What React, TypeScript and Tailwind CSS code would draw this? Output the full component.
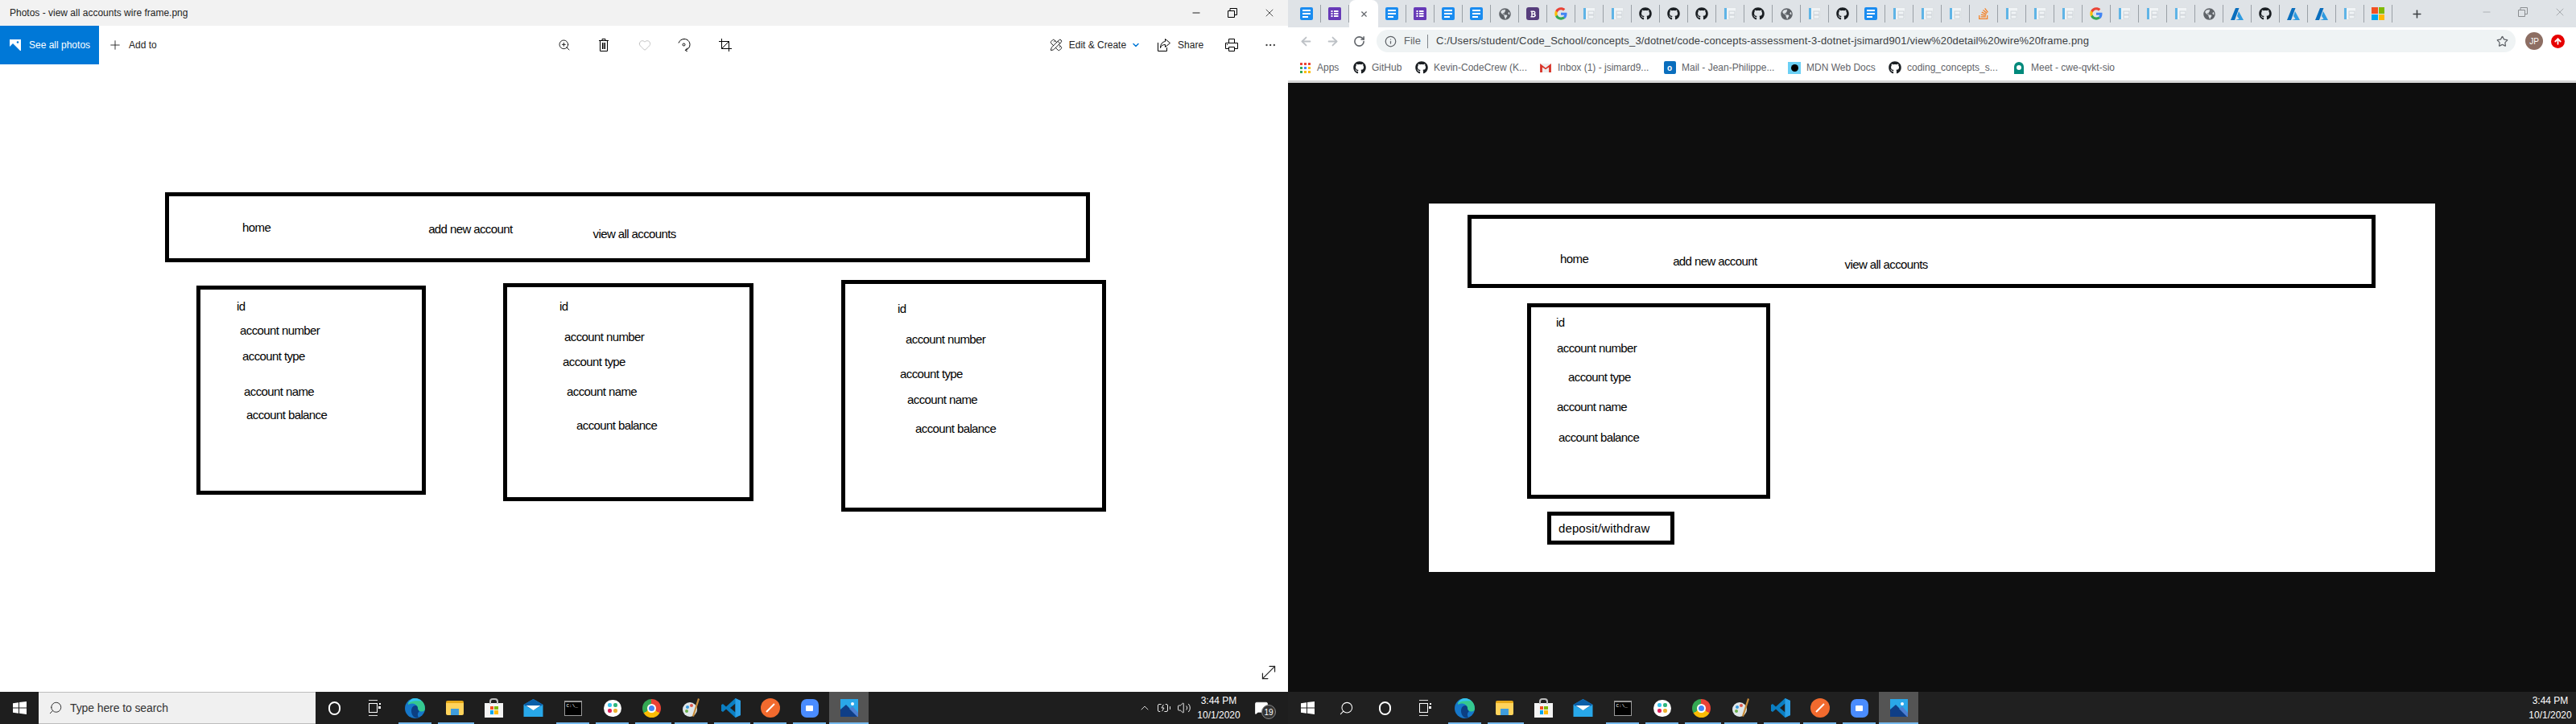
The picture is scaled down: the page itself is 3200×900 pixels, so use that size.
import React from 'react';
import { Plus, ZoomIn, Heart, PencilRuler, ChevronDown, MoreHorizontal, Minus, X, ArrowLeft, ArrowRight, RotateCw as Reload, Info, Star, Search, ChevronUp, BatteryCharging, Volume2, MessageSquare, ArrowUp, MoveDiagonal } from 'lucide-react';
import { FaGithub, FaBold, FaStackOverflow, FaGlobeAmericas } from 'react-icons/fa';

const FONT = "[font-family:'Liberation_Sans',Arial,sans-serif]";

function GoogleG({ size = 16 }: { size?: number }) {
  return (
    <svg width={size} height={size} viewBox="0 0 48 48">
      <path fill="#EA4335" d="M24 10c3.500 0 6.600 1.200 9.100 3.500l6.800-6.800C35.800 2.900 30.300 1 24 1 14.900 1 7.100 6.200 3.300 13.800l7.900 6.100C13.100 14 18.100 10 24 10z" />
      <path fill="#4285F4" d="M46.500 24.500c0-1.600-.1-3.100-.4-4.500H24v9h12.700c-.6 2.900-2.200 5.400-4.700 7l7.600 5.900c4.400-4.100 6.900-10.100 6.900-17.400z" />
      <path fill="#FBBC05" d="M11.200 28.900C10.700 27.400 10.500 25.700 10.500 24s.2-3.400.7-4.900l-7.900-6.100C1.800 16.300 1 20 1 24s.8 7.700 2.300 11l7.900-6.100z" />
      <path fill="#34A853" d="M24 47c6.300 0 11.500-2.100 15.600-5.600L32 35.500c-2.100 1.400-4.800 2.300-8 2.300-5.900 0-10.900-4-12.700-9.300l-7.900 6.100C7.100 41.800 14.900 47 24 47z" />
    </svg>
  );
}

function DocIcon() {
  return (
    <div className="flex h-[16px] w-[16px] flex-col justify-center gap-[2px] rounded-[2px] bg-[#1a8cf0] px-[3px]">
      <div className="h-[2px] w-full bg-white" />
      <div className="h-[2px] w-full bg-white" />
      <div className="h-[2px] w-2/3 bg-white" />
    </div>
  );
}

function FormIcon() {
  return (
    <svg width="16" height="16" viewBox="0 0 16 16">
      <rect width="16" height="16" rx="1.500" fill="#673ab7" />
      <path d="M3.500 4h2v2h-2zM7 4h5.500v2H7zM3.500 7h2v2h-2zM7 7h5.500v2H7zM3.500 10h2v2h-2zM7 10h5.500v2H7z" fill="#fff" />
    </svg>
  );
}

function FileIcon() {
  return (
    <svg width="16" height="16" viewBox="0 0 16 16">
      <rect x="0.500" y="0.500" width="15" height="15" fill="#f1f4f6" stroke="#dde1e4" />
      <rect x="1" y="1" width="3" height="14" fill="#5fb4e6" />
      <rect x="7" y="5" width="7" height="4" fill="none" stroke="#cbd1d6" />
      <rect x="7" y="10" width="7" height="4" fill="none" stroke="#cbd1d6" />
    </svg>
  );
}

function AzureIcon() {
  return (
    <svg width="16" height="15" viewBox="0 0 16 15">
      <path d="M6 0h4.500L5 15H0z" fill="#0a6ebd" />
      <path d="M10 4l6 11H6l4.500-1.500L8 10z" fill="#2f9be0" />
    </svg>
  );
}

function MsLogo() {
  return (
    <div className="grid h-[16px] w-[16px] grid-cols-2 grid-rows-2 gap-[1px]">
      <div className="bg-[#f25022]" />
      <div className="bg-[#7fba00]" />
      <div className="bg-[#00a4ef]" />
      <div className="bg-[#ffb900]" />
    </div>
  );
}

type TabKind = 'doc' | 'form' | 'active' | 'globe' | 'bs' | 'g' | 'file' | 'gh' | 'so' | 'az' | 'ms';

const tabs: TabKind[] = [
  'doc', 'form', 'active', 'doc', 'form', 'doc', 'doc', 'globe', 'bs', 'g', 'file', 'file', 'gh', 'gh', 'gh', 'file', 'gh', 'globe', 'file', 'gh', 'doc', 'file',
  'file', 'file', 'so', 'file', 'file', 'file', 'g', 'file', 'file', 'file', 'globe', 'az', 'gh', 'az', 'az', 'file', 'ms',
];

function TabGlyph({ kind }: { kind: TabKind }) {
  if (kind === 'doc') return <DocIcon />;
  if (kind === 'form') return <FormIcon />;
  if (kind === 'globe') return <FaGlobeAmericas className="text-[15px] text-[#5f6368]" />;
  if (kind === 'bs') return <div className="flex h-[16px] w-[16px] items-center justify-center rounded-[3px] bg-[#563d7c]"><FaBold className="text-[9px] text-white" /></div>;
  if (kind === 'g') return <GoogleG />;
  if (kind === 'file') return <FileIcon />;
  if (kind === 'gh') return <FaGithub className="text-[16px] text-[#1b1f23]" />;
  if (kind === 'so') return <FaStackOverflow className="text-[16px] text-[#f48024]" />;
  if (kind === 'az') return <AzureIcon />;
  if (kind === 'ms') return <MsLogo />;
  return null;
}

function RestoreIcon({ className }: { className?: string }) {
  return (
    <svg width="12" height="12" viewBox="0 0 12 12" fill="none" stroke="currentColor" className={className}>
      <path d="M.500 3.500h8v8h-8z" />
      <path d="M3 3.500V.500h8.500v8H8.500" />
    </svg>
  );
}

function TabStrip() {
  return (
    <div className="flex h-[34px] items-center bg-[#dfe3e7] pl-[6px]">
      {tabs.map((kind, i) =>
        kind === 'active' ? (
          <div key={i} className="flex h-[34px] w-[36px] items-center justify-center rounded-t-[8px] bg-white">
            <X size={11} className="text-[#5f6368]" strokeWidth={2.5} />
          </div>
        ) : (
          <div key={i} className="flex h-[34px] w-[35px] items-center">
            <div className="flex flex-1 justify-center">
              <TabGlyph kind={kind} />
            </div>
            <div className="h-[22px] w-px bg-[#9aa0a6]" />
          </div>
        )
      )}
      <div className="ml-[23px] flex items-center">
        <Plus size={15} strokeWidth={2.5} className="text-[#3c4043]" />
      </div>
      <div className="ml-[72px] flex -translate-y-[2px] items-center gap-[32px] text-[#8a8d90]">
        <Minus size={14} strokeWidth={1} />
        <RestoreIcon />
        <X size={16} strokeWidth={1} />
      </div>
    </div>
  );
}

function AddressRow() {
  return (
    <div className="flex h-[34px] items-center bg-white pl-[14px]">
      <ArrowLeft size={17} strokeWidth={2.5} className="text-[#bdc1c6]" />
      <ArrowRight size={17} strokeWidth={2.5} className="ml-[16px] text-[#bdc1c6]" />
      <Reload size={15} strokeWidth={2.5} className="ml-[17px] text-[#5f6368]" />
      <div className="ml-[14px] flex h-[28px] w-[1415px] items-center rounded-full bg-[#eff3f4] pl-[10px] text-[#3c4043]">
        <Info size={15} className="text-[#5f6368]" />
        <span className="ml-[9px] text-[13px] text-[#5f6368]">File</span>
        <div className="ml-[8px] h-[17px] w-px bg-[#80868b]" />
        <span className="ml-[10px] text-[13px] whitespace-nowrap tracking-[0.16px]">C:/Users/student/Code_School/concepts_3/dotnet/code-concepts-assessment-3-dotnet-jsimard901/view%20detail%20wire%20frame.png</span>
        <Star size={15} className="ml-auto mr-[9px] text-[#5f6368]" />
      </div>
      <div className="ml-[12px] flex h-[22px] w-[22px] items-center justify-center rounded-full bg-[#8d6e63] text-[10px] text-white">JP</div>
      <div className="ml-[10px] flex h-[17px] w-[17px] items-center justify-center rounded-full bg-[#e60000]">
        <ArrowUp size={11} strokeWidth={4} className="text-white" />
      </div>
    </div>
  );
}

function AppsGrid() {
  const colors = ['bg-[#ea4335]', 'bg-[#ea4335]', 'bg-[#ea4335]', 'bg-[#34a853]', 'bg-[#4285f4]', 'bg-[#fbbc05]', 'bg-[#34a853]', 'bg-[#fbbc05]', 'bg-[#fbbc05]'];
  return (
    <div className="grid h-[13px] w-[13px] grid-cols-3 gap-[2px]">
      {colors.map((c, i) => <div key={i} className={c} />)}
    </div>
  );
}

function Bookmark({ icon, label, w }: { icon: React.ReactNode; label: string; w: string }) {
  return (
    <div className={`flex items-center ${w}`}>
      <div className="flex w-[16px] shrink-0 justify-center">{icon}</div>
      <span className="ml-[7px] text-[12px] whitespace-nowrap text-[#5f6368]">{label}</span>
    </div>
  );
}

function BookmarksRow() {
  const gh = <FaGithub className="text-[16px] text-[#1b1f23]" />;
  return (
    <div className="box-content flex h-[32px] items-center border-b-[3px] border-[#d8d8d8] bg-white pl-[13px]">
      <Bookmark icon={<AppsGrid />} label="Apps" w="w-[68px]" />
      <Bookmark icon={gh} label="GitHub" w="w-[77px]" />
      <Bookmark icon={gh} label="Kevin-CodeCrew (K..." w="w-[154px]" />
      <Bookmark icon={<svg width="14" height="11" viewBox="0 0 15 12"><path d="M0 0h15v12H0z" fill="#eee" /><path d="M0 0l7.500 6L15 0v12h-3V5L7.500 8 3 5v7H0z" fill="#d93025" /></svg>} label="Inbox (1) - jsimard9..." w="w-[154px]" />
      <Bookmark icon={<div className="flex h-[16px] w-[15px] items-center justify-center rounded-[2px] bg-[#0a6ebd] text-[10px] font-bold text-white">o</div>} label="Mail - Jean-Philippe..." w="w-[155px]" />
      <Bookmark icon={<div className="h-[15px] w-[16px] bg-[#6bd0f5] pt-[3px]"><div className="mx-auto h-[9px] w-[9px] rounded-full bg-black" /></div>} label="MDN Web Docs" w="w-[125px]" />
      <Bookmark icon={gh} label="coding_concepts_s..." w="w-[154px]" />
      <Bookmark icon={<div className="flex h-[15px] w-[12px] items-center justify-center rounded-t-full rounded-b-[6px] bg-[#00897b]"><div className="h-[6px] w-[6px] rounded-full bg-white" /></div>} label="Meet - cwe-qvkt-sio" w="w-[140px]" />
    </div>
  );
}

function Card({ className, children }: { className: string; children: React.ReactNode }) {
  return <div className={`shrink-0 border-[5px] border-black ${className}`}>{children}</div>;
}

function Label({ className, text, tracking = 'tracking-[-0.6px]' }: { className: string; text: string; tracking?: string }) {
  return <div className={`h-[18px] text-[15px] leading-[18px] whitespace-nowrap text-black ${tracking} ${className}`}>{text}</div>;
}

function SeeAllIcon() {
  return (
    <svg width="14" height="14" viewBox="0 0 14 14">
      <rect width="14" height="14" fill="#fff" />
      <circle cx="10" cy="3.500" r="1.300" fill="#0078d7" />
      <path d="M0 9l4-4 9 9H0z" fill="#0078d7" />
    </svg>
  );
}

function TrashIcon({ className }: { className?: string }) {
  return (
    <svg width="16" height="16" viewBox="0 0 16 16" fill="none" stroke="currentColor" className={className}>
      <path d="M2 2.500h12M6 2.500V.500h4v2M3.500 2.500v13h9v-13M6.500 5v8M8 5v8M9.500 5v8" />
    </svg>
  );
}

function RotateIcon({ className }: { className?: string }) {
  return (
    <svg width="16" height="16" viewBox="0 0 16 16" fill="none" stroke="currentColor" className={className}>
      <path d="M1 5.500C2 2.500 4.800.500 8 .500c4 0 7 3.200 7 7 0 3.300-2.200 6-5.500 6.800" />
      <path d="M12 11.500l-2.700 3 2.700 1.500" />
      <circle cx="7.500" cy="7.500" r="1.500" />
    </svg>
  );
}

function CropIcon({ className }: { className?: string }) {
  return (
    <svg width="16" height="16" viewBox="0 0 16 16" fill="none" stroke="currentColor" className={className}>
      <path d="M0 3.500h12.500V16M3.500 0v12.500H16M3.500 12.500l9-9" />
    </svg>
  );
}

function ShareIcon({ className }: { className?: string }) {
  return (
    <svg width="16" height="16" viewBox="0 0 16 16" fill="none" stroke="currentColor" className={className}>
      <path d="M.500 5v10.500h11V11" />
      <path d="M9.500.500l6 5-6 5V7.500c-3 0-5 1-6 4C3.500 7 6 4 9.500 3.500z" />
    </svg>
  );
}

function PrintIcon({ className }: { className?: string }) {
  return (
    <svg width="16" height="16" viewBox="0 0 16 16" fill="none" stroke="currentColor" className={className}>
      <path d="M4.500 5.500v-5h7v5M4.500 12.500H.500v-7h15v7h-4" />
      <path d="M4.500 10.500h7v5h-7zM2 7.500h1" />
    </svg>
  );
}

function LeftWindow() {
  return (
    <div className="flex h-full w-[1600px] shrink-0 flex-col bg-white">
      <div className="flex h-[32px] items-center bg-[#f2f2f2] pl-[12px] text-[12px] text-[#222]">
        <span>Photos - view all accounts wire frame.png</span>
        <div className="ml-auto flex items-center gap-[32px] pr-[15px] text-black">
          <Minus size={14} strokeWidth={1.5} />
          <RestoreIcon />
          <X size={16} strokeWidth={1} />
        </div>
      </div>
      <div className="flex h-[48px] items-center text-[12px] text-[#222]">
        <div className="flex h-full w-[123px] items-center bg-[#0078d7] pl-[12px] text-white">
          <SeeAllIcon />
          <span className="ml-[10px]">See all photos</span>
        </div>
        <Plus size={18} strokeWidth={1.2} className="ml-[11px]" />
        <span className="ml-[8px]">Add to</span>
        <ZoomIn size={16} strokeWidth={1.3} className="ml-[498px] text-black" />
        <TrashIcon className="ml-[33px] text-black" />
        <Heart size={16} strokeWidth={1.2} className="ml-[35px] text-[#b5b5b5]" />
        <RotateIcon className="ml-[33px] text-black" />
        <CropIcon className="ml-[35px] text-black" />
        <PencilRuler size={16} strokeWidth={1.3} className="ml-[395px] text-black" />
        <span className="ml-[8px]">Edit &amp; Create</span>
        <ChevronDown size={12} strokeWidth={3} className="ml-[6px] text-[#0078d7]" />
        <ShareIcon className="ml-[21px] text-black" />
        <span className="ml-[9px]">Share</span>
        <PrintIcon className="ml-[27px] text-black" />
        <MoreHorizontal size={16} strokeWidth={1.2} className="ml-[32px] text-black" />
      </div>

      <div className="flex-1 pl-[205px] pt-[159px]">
        <Card className="flex h-[87px] w-[1149px] items-start">
          <Label className="ml-[91px] mt-[30px]" text="home" />
          <Label className="ml-[196px] mt-[32px]" text="add new account" />
          <Label className="ml-[100px] mt-[38px]" text="view all accounts" />
        </Card>
        <div className="flex items-start">
          <Card className="ml-[39px] mt-[29px] h-[260px] w-[285px]">
            <Label className="ml-[45px] mt-[12px]" text="id" />
            <Label className="ml-[49px] mt-[12px]" text="account number" />
            <Label className="ml-[52px] mt-[14px]" text="account type" />
            <Label className="ml-[54px] mt-[26px]" text="account name" />
            <Label className="ml-[57px] mt-[11px]" text="account balance" />
          </Card>
          <Card className="ml-[96px] mt-[26px] h-[271px] w-[311px]">
            <Label className="ml-[65px] mt-[15px]" text="id" />
            <Label className="ml-[71px] mt-[20px]" text="account number" />
            <Label className="ml-[69px] mt-[13px]" text="account type" />
            <Label className="ml-[74px] mt-[19px]" text="account name" />
            <Label className="ml-[86px] mt-[24px]" text="account balance" />
          </Card>
          <Card className="ml-[109px] mt-[22px] h-[288px] w-[329px]">
            <Label className="ml-[65px] mt-[22px]" text="id" />
            <Label className="ml-[75px] mt-[20px]" text="account number" />
            <Label className="ml-[68px] mt-[25px]" text="account type" />
            <Label className="ml-[77px] mt-[14px]" text="account name" />
            <Label className="ml-[87px] mt-[18px]" text="account balance" />
          </Card>
        </div>
        <div className="flex justify-end pr-[11px] pt-[187px]">
          <MoveDiagonal size={26} strokeWidth={1.1} className="text-[#222]" />
        </div>
      </div>
    </div>
  );
}

function RightWindow() {
  return (
    <div className="flex h-full w-[1600px] shrink-0 flex-col bg-[#0e0e0e]">
      <TabStrip />
      <AddressRow />
      <BookmarksRow />
      <div className="pl-[175px] pt-[150px]">
        <div className="h-[458px] w-[1250px] bg-white pl-[48px] pt-[14px]">
          <Card className="flex h-[91px] w-[1128px] items-start">
            <Label className="ml-[110px] mt-[41px]" text="home" />
            <Label className="ml-[105px] mt-[44px]" text="add new account" />
            <Label className="ml-[109px] mt-[48px]" text="view all accounts" />
          </Card>
          <Card className="ml-[74px] mt-[19px] h-[243px] w-[302px]">
            <Label className="ml-[31px] mt-[10px]" text="id" />
            <Label className="ml-[32px] mt-[14px]" text="account number" />
            <Label className="ml-[46px] mt-[18px]" text="account type" />
            <Label className="ml-[32px] mt-[19px]" text="account name" />
            <Label className="ml-[34px] mt-[20px]" text="account balance" />
          </Card>
          <Card className="ml-[99px] mt-[16px] flex h-[41px] w-[158px] items-center">
            <Label className="ml-[9px]" text="deposit/withdraw" tracking="tracking-[0.1px]" />
          </Card>
        </div>
      </div>
    </div>
  );
}

function StartIcon({ className }: { className?: string }) {
  return (
    <svg width="17" height="16" viewBox="0 0 17 16" className={className}>
      <path d="M0 2.300l7-1v6.300H0zM8 1.100L17 0v7.600H8zM0 8.500h7v6.300l-7-1zM8 8.500h9V16l-9-1.200z" fill="#fff" />
    </svg>
  );
}

function EdgeIcon() {
  return (
    <svg width="25" height="25" viewBox="0 0 25 25">
      <circle cx="12.500" cy="12.500" r="12.500" fill="#1677c9" />
      <path d="M4 6C6 2 9.500 0 12.500 0 19 0 25 5 25 13c0 2-1.500 3.500-4 3.500-3 0-5-1-5-3 0-4-3-7-6.500-7C7.500 6.500 5.500 7 4 8z" fill="#35c98f" />
      <path d="M4 6C6 2 9.500 0 12.500 0c3 0 6 1.200 8 3.500C15 3 9 3 4 6z" fill="#35c1f1" />
      <path d="M8 16c0-4 2-7 5-7 2 0 3 1.500 3 3.500 0 1.200.5 2.500 2 3.500-2 2-3 5-1 8-5 2-9-3-9-8z" fill="#0c3f82" />
    </svg>
  );
}

function FolderIcon() {
  return (
    <div className="h-[18px] w-[22px] rounded-[2px] border-t-[3px] border-[#e6a817] bg-[#ffd35c]">
      <div className="mx-auto mt-[7px] h-[8px] w-[10px] bg-[#3f9ddd]" />
    </div>
  );
}

function StoreIcon() {
  return (
    <div className="relative mt-[5px] h-[18px] w-[23px] bg-[#f4f4f4] pt-[4px]">
      <div className="absolute -top-[6px] left-[6px] h-[7px] w-[11px] rounded-t-[4px] border-2 border-b-0 border-[#bbb]" />
      <div className="mx-auto grid h-[10px] w-[10px] grid-cols-2 gap-[1px]">
        <div className="bg-[#f25022]" />
        <div className="bg-[#7fba00]" />
        <div className="bg-[#00a4ef]" />
        <div className="bg-[#ffb900]" />
      </div>
    </div>
  );
}

function MailIcon() {
  return (
    <svg width="25" height="22" viewBox="0 0 24 22">
      <path d="M0 7L12 0l12 7v15H0z" fill="#28a8ea" />
      <path d="M0 7L12 0l12 7-12 7z" fill="#0a5ea8" />
      <path d="M3 8h18l-9 6z" fill="#fff" />
    </svg>
  );
}

function CmdIcon() {
  return (
    <div className="h-[19px] w-[22px] border border-[#999] border-t-[2px] bg-black pl-[2px] pt-[2px] font-mono text-[6px] leading-[6px] text-white">C:\_</div>
  );
}

function SlackIcon() {
  return (
    <div className="flex h-[21px] w-[22px] items-center justify-center rounded-full bg-white">
      <div className="grid h-[12px] w-[12px] grid-cols-2 gap-[2px]">
        <div className="rounded-[2px] bg-[#36c5f0]" />
        <div className="rounded-[2px] bg-[#2eb67d]" />
        <div className="rounded-[2px] bg-[#e01e5a]" />
        <div className="rounded-[2px] bg-[#ecb22e]" />
      </div>
    </div>
  );
}

function ChromeIcon() {
  return (
    <div className="flex h-[23px] w-[23px] items-center justify-center rounded-full bg-[conic-gradient(#ea4335_0deg_120deg,#fbbc05_120deg_240deg,#34a853_240deg_360deg)]">
      <div className="h-[11px] w-[11px] rounded-full border-2 border-white bg-[#4285f4]" />
    </div>
  );
}

function PaintIcon() {
  return (
    <svg width="22" height="24" viewBox="0 0 22 24">
      <ellipse cx="9" cy="14" rx="9" ry="9" fill="#dfe7ea" />
      <circle cx="6" cy="11" r="2" fill="#3b9be0" />
      <circle cx="11" cy="9" r="2" fill="#e0584d" />
      <circle cx="5" cy="16" r="2" fill="#6ab04c" />
      <path d="M19 0l2 1-7 22-2-1z" fill="#c98d3b" />
    </svg>
  );
}

function VsCodeIcon() {
  return (
    <svg width="24" height="24" viewBox="0 0 24 24">
      <path d="M17.500 0L24 3v18l-6.500 3L6 13.500 2 17l-2-1.200V8.200L2 7l4 3.500z" fill="#0a7ec2" />
      <path d="M17.500 6.500L11 12l6.500 5.500z" fill="#1e1e1e" />
      <path d="M17.500 0L24 3v18l-6.500 3z" fill="#2a9fe6" />
    </svg>
  );
}

function PencilApp() {
  return (
    <div className="flex h-[24px] w-[24px] items-center justify-center rounded-full bg-[#f26a2e]">
      <div className="h-[14px] w-[2px] rotate-45 bg-white" />
    </div>
  );
}

function ZoomApp() {
  return (
    <div className="flex h-[23px] w-[22px] items-center justify-center rounded-[7px] bg-[#4a8cff]">
      <div className="h-[7px] w-[9px] rounded-[1px] bg-white" />
    </div>
  );
}

function PhotosApp() {
  return (
    <svg width="22" height="22" viewBox="0 0 22 22">
      <rect width="22" height="22" fill="#2aa7e8" />
      <circle cx="15" cy="6" r="2" fill="#fff" />
      <path d="M0 22V13l7-6 15 15z" fill="#0f3e86" />
      <path d="M11 12l4-3 7 8v5h-1z" fill="#4d7fd1" />
    </svg>
  );
}

function TaskView() {
  return (
    <div className="relative h-[20px] w-[11px] border-y border-[#ddd] py-[3px]">
      <div className="h-full w-full border border-white" />
      <div className="absolute -right-[4px] top-[3px] h-[2px] w-[2px] bg-white" />
      <div className="absolute -right-[4px] top-[7px] h-[3px] w-[3px] bg-white" />
    </div>
  );
}

function TaskIcon({ children, running, active, extra }: { children: React.ReactNode; running?: boolean; active?: boolean; extra?: boolean }) {
  return (
    <div className={`relative flex h-[40px] w-[49px] shrink-0 items-center justify-center ${active ? 'bg-[#545454]' : ''}`}>
      {children}
      {running && <div className={`absolute bottom-0 h-[2px] bg-[#76b9ed] ${active ? 'inset-x-0' : extra ? 'left-[4px] right-0' : 'inset-x-[4px]'}`} />}
    </div>
  );
}

function AppIcons() {
  return (
    <>
      <TaskIcon running><EdgeIcon /></TaskIcon>
      <TaskIcon running extra><FolderIcon /></TaskIcon>
      <TaskIcon><StoreIcon /></TaskIcon>
      <TaskIcon><MailIcon /></TaskIcon>
      <TaskIcon running><CmdIcon /></TaskIcon>
      <TaskIcon running><SlackIcon /></TaskIcon>
      <TaskIcon running extra><ChromeIcon /></TaskIcon>
      <TaskIcon running><PaintIcon /></TaskIcon>
      <TaskIcon running extra><VsCodeIcon /></TaskIcon>
      <TaskIcon running><PencilApp /></TaskIcon>
      <TaskIcon running><ZoomApp /></TaskIcon>
      <TaskIcon running active><PhotosApp /></TaskIcon>
    </>
  );
}

function Clock({ className }: { className?: string }) {
  return (
    <div className={`flex flex-col items-center gap-[2px] text-[12px] leading-[16px] text-white ${className}`}>
      <span>3:44 PM</span>
      <span>10/1/2020</span>
    </div>
  );
}

function TaskbarLeft() {
  return (
    <div className="flex h-full w-[1600px] shrink-0 items-center bg-[#1e1e1e]">
      <div className="flex w-[48px] justify-center"><StartIcon /></div>
      <div className="flex h-full w-[344px] items-center border-y border-[#bdbdbd] bg-[#f0f0f0] pl-[12px] text-[14px] text-[#333]">
        <Search size={18} strokeWidth={1.3} className="-scale-x-100" />
        <span className="ml-[9px] tracking-[-0.1px]">Type here to search</span>
      </div>
      <div className="ml-[16px] h-[17px] w-[15px] rounded-full border-2 border-white" />
      <div className="ml-[35px]"><TaskView /></div>
      <div className="ml-[22px] flex"><AppIcons /></div>
      <div className="ml-[335px] flex items-center text-white">
        <ChevronUp size={16} strokeWidth={1.2} />
        <BatteryCharging size={18} strokeWidth={1.2} className="ml-[7px]" />
        <Volume2 size={18} strokeWidth={1.2} className="ml-[7px]" />
        <Clock className="ml-[4px] w-[60px]" />
        <div className="relative ml-[14px]">
          <MessageSquare size={18} fill="#fff" strokeWidth={1} />
          <span className="absolute -bottom-[5px] -right-[9px] flex h-[18px] w-[18px] items-center justify-center rounded-full border border-[#888] bg-[#333] text-[10px] text-white">19</span>
        </div>
      </div>
    </div>
  );
}

function TaskbarRight() {
  return (
    <div className="flex h-full w-[1600px] shrink-0 items-center bg-[#202020]">
      <div className="flex w-[48px] justify-center"><StartIcon /></div>
      <div className="flex w-[48px] justify-center"><Search size={19} strokeWidth={1.3} className="-scale-x-100 text-white" /></div>
      <div className="flex w-[48px] justify-center"><div className="h-[17px] w-[15px] rounded-full border-2 border-white" /></div>
      <div className="flex w-[48px] justify-center"><TaskView /></div>
      <div className="ml-[3px] flex"><AppIcons /></div>
      <Clock className="ml-auto mr-[2px] w-[60px]" />
    </div>
  );
}

export default function App() {
  return (
    <div className={`flex h-[900px] w-[3200px] flex-col overflow-hidden ${FONT}`}>
      <div className="flex h-[860px]">
        <LeftWindow />
        <RightWindow />
      </div>
      <div className="flex h-[40px]">
        <TaskbarLeft />
        <TaskbarRight />
      </div>
    </div>
  );
}
